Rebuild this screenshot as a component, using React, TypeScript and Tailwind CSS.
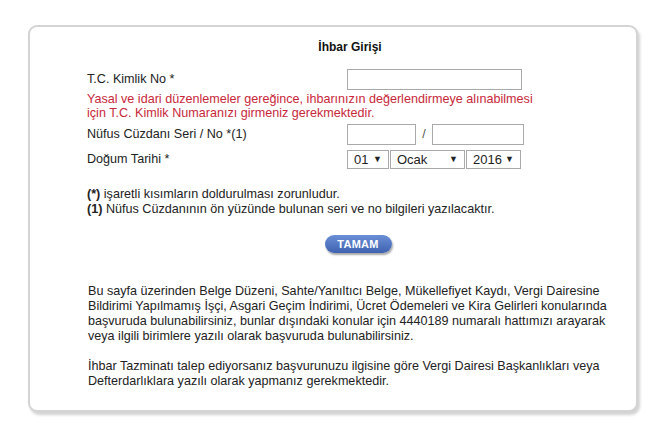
import React from 'react';

const Caret = () => <span className="text-[9px] leading-none text-[#222]">▼</span>;

const FakeSelect = ({ value, width }: { value: string; width: string }) => (
  <div className={`${width} h-[19px] border border-[#a9a9a9] bg-white flex items-center justify-between pl-[6px] pr-[6px] text-[13px] text-[#222]`}>
    <span>{value}</span>
    <Caret />
  </div>
);

const App: React.FC = () => {
  return (
    <div className="w-[670px] h-[436px] bg-white pt-[25px] pl-[28px]" style={{ fontFamily: '"Liberation Sans", Arial, sans-serif' }}>
      <div className="w-[610px] h-[387px] rounded-[9px] border-2 border-[#d4d4d4] bg-white shadow-[2px_3px_3px_rgba(0,0,0,0.18)] text-[#222] text-[12.6px] leading-[15px]">
        {/* Title */}
        <div className="pt-[13px] text-center font-bold text-[12px] text-[#111] pl-[34px]">İhbar Girişi</div>

        {/* Form */}
        <div className="pl-[57px] pt-[14px]">
          <div className="flex items-center h-[21px]">
            <div className="w-[260px]">T.C. Kimlik No *</div>
            <div className="w-[175px] h-[21px] border border-[#a9a9a9] bg-white" />
          </div>
          <div className="text-[#c8283a] mt-[2px] leading-[14px]">
            Yasal ve idari düzenlemeler gereğince, ihbarınızın değerlendirmeye alınabilmesi
            <br />
            için T.C. Kimlik Numaranızı girmeniz gerekmektedir.
          </div>
          <div className="flex items-center h-[21px] mt-[4px]">
            <div className="w-[260px]">Nüfus Cüzdanı Seri / No *(1)</div>
            <div className="w-[69px] h-[21px] border border-[#a9a9a9] bg-white" />
            <div className="w-[16px] text-center text-[#555]">/</div>
            <div className="w-[92px] h-[21px] border border-[#a9a9a9] bg-white" />
          </div>
          <div className="flex items-center h-[19px] mt-[5px]">
            <div className="w-[260px]">Doğum Tarihi *</div>
            <div className="flex gap-[1px]">
              <FakeSelect value="01" width="w-[42px]" />
              <FakeSelect value="Ocak" width="w-[75px]" />
              <FakeSelect value="2016" width="w-[55px]" />
            </div>
          </div>

          <div className="mt-[18px]">
            <div>
              <span className="font-bold">(*)</span> işaretli kısımların doldurulması zorunludur.
            </div>
            <div>
              <span className="font-bold">(1)</span> Nüfus Cüzdanının ön yüzünde bulunan seri ve no bilgileri yazılacaktır.
            </div>
          </div>
        </div>

        {/* Button */}
        <div className="flex justify-center pl-[50px] mt-[18px]">
          <button className="w-[67px] h-[18px] rounded-full bg-gradient-to-b from-[#6b8fd6] to-[#3f62b0] text-white font-bold text-[11px] leading-[18px] shadow-[1px_2px_2px_rgba(0,0,0,0.35)] tracking-[0.3px]">
            TAMAM
          </button>
        </div>

        {/* Info */}
        <div className="pl-[58px] mt-[31px] whitespace-nowrap">
          <p>
            Bu sayfa üzerinden Belge Düzeni, Sahte/Yanıltıcı Belge, Mükellefiyet Kaydı, Vergi Dairesine
            <br />
            Bildirimi Yapılmamış İşçi, Asgari Geçim İndirimi, Ücret Ödemeleri ve Kira Gelirleri konularında
            <br />
            başvuruda bulunabilirsiniz, bunlar dışındaki konular için 4440189 numaralı hattımızı arayarak
            <br />
            veya ilgili birimlere yazılı olarak başvuruda bulunabilirsiniz.
          </p>
          <p className="mt-[15px]">
            İhbar Tazminatı talep ediyorsanız başvurunuzu ilgisine göre Vergi Dairesi Başkanlıkları veya
            <br />
            Defterdarlıklara yazılı olarak yapmanız gerekmektedir.
          </p>
        </div>
      </div>
    </div>
  );
};

export default App;
